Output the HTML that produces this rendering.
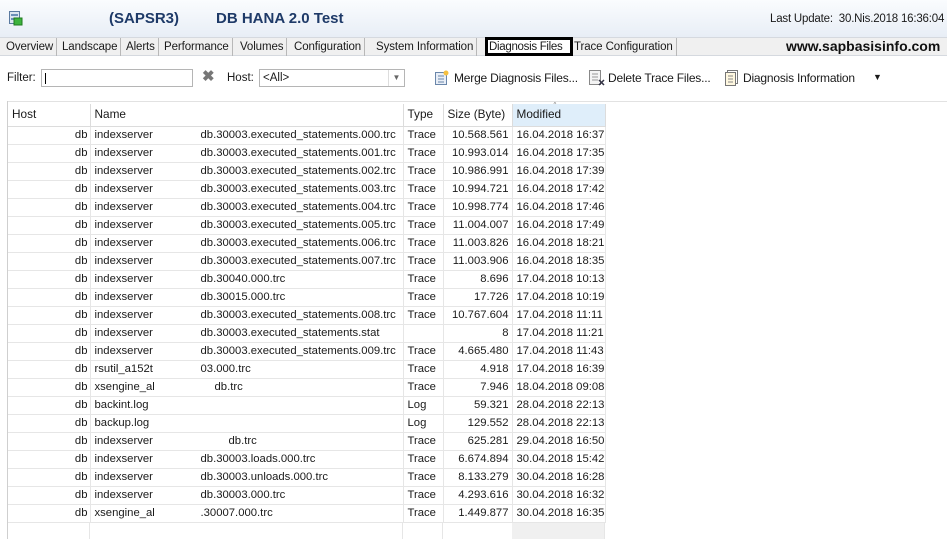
<!DOCTYPE html>
<html><head><meta charset="utf-8"><style>
*{margin:0;padding:0;box-sizing:border-box}
body{width:947px;height:539px;overflow:hidden;background:#fff;font-family:"Liberation Sans",sans-serif;font-size:11.5px;color:#1a1a1a;position:relative}
.ab{position:absolute;white-space:nowrap}
.hdr{position:absolute;left:0;top:0;width:947px;height:37px;background:linear-gradient(#fafcfe,#e8eef6)}
.t1{position:absolute;top:10px;font-weight:bold;font-size:15px;color:#1e3a68;white-space:nowrap}
.tabs{position:absolute;left:0;top:37px;width:947px;height:19px;background:#f0f0f0;border-top:1px solid #d5d9df;border-bottom:1px solid #d5d9df}
.tab{position:absolute;top:0;height:18px;line-height:18px;padding:0 3px;border-right:1px solid #b8b8b8;font-size:11.5px;letter-spacing:-0.1px;white-space:nowrap}
table{position:absolute;left:8px;top:104px;border-collapse:collapse;table-layout:fixed;width:597px;font-size:11.3px}
td,th{height:18px;line-height:17px;font-weight:normal;white-space:nowrap;overflow:hidden;border-right:1px solid #e6e6e6;border-bottom:1px solid #e6e6e6;padding:0 4px}
th{height:22px;line-height:21px;text-align:left;background:#fff;border-right:1px solid #dcdcdc;border-bottom:1px solid #dcdcdc;font-size:11.8px}
th.m{background:#dfeefa}
td.h{text-align:right;padding-right:2px}
td.r{text-align:right;padding-right:3px}
td i{font-style:normal;display:inline-block;width:106px}
</style></head><body>
<div class="hdr"></div>
<svg class="ab" style="left:9px;top:11px" width="14" height="15"><rect x="0.5" y="0.5" width="10" height="12" fill="#dce6f1" stroke="#5a7aa0"/><rect x="2" y="3" width="7" height="2" fill="#6b8fb8"/><rect x="2" y="7" width="7" height="2" fill="#6b8fb8"/><rect x="5" y="7" width="8" height="7" fill="#3db33d" stroke="#1e7a1e"/></svg>
<div class="t1" style="left:109px">(SAPSR3)</div>
<div class="t1" style="left:216px">DB HANA 2.0 Test</div>
<div class="ab" style="left:770px;top:13px;font-size:11.5px;letter-spacing:-0.2px">Last Update:&nbsp; 30.Nis.2018 16:36:04</div>
<div class="tabs">
<div class="tab" style="left:3px">Overview</div>
<div class="tab" style="left:59px">Landscape</div>
<div class="tab" style="left:123px">Alerts</div>
<div class="tab" style="left:161px">Performance</div>
<div class="tab" style="left:237px">Volumes</div>
<div class="tab" style="left:291px">Configuration</div>
<div class="tab" style="left:373px">System Information</div>
<div class="tab" style="left:571px">Trace Configuration</div>
<div class="ab" style="left:485px;top:-1px;width:88px;height:19px;border:3px solid #000;background:#fff;line-height:14px;padding-left:1px;font-size:11.5px;letter-spacing:-0.3px;overflow:hidden">Diagnosis Files</div>
<div class="ab" style="left:786px;top:0;font-weight:bold;font-size:14px;line-height:16px;color:#111">www.sapbasisinfo.com</div>
</div>
<div class="ab" style="left:7px;top:72px">Filter:</div>
<div class="ab" style="left:41px;top:69px;width:152px;height:18px;border:1px solid #b5b5b5"><div style="position:absolute;left:3px;top:3px;width:1px;height:11px;background:#000"></div></div>
<div class="ab" style="left:202px;top:67px;font-size:15px;color:#777;font-weight:bold">✖</div>
<div class="ab" style="left:227px;top:72px">Host:</div>
<div class="ab" style="left:259px;top:69px;width:146px;height:18px;border:1px solid #b5b5b5;padding:2px 3px">&lt;All&gt;<span style="position:absolute;right:0;top:0;width:16px;height:16px;border-left:1px solid #ddd;font-size:8px;color:#666;text-align:center;line-height:16px">▼</span></div>
<svg class="ab" style="left:435px;top:70px" width="14" height="15"><rect x="0.5" y="2.5" width="11" height="12" fill="#e8eef7" stroke="#6a86aa"/><path d="M3 6h6M3 9h6M3 12h6" stroke="#6a86aa"/><circle cx="11" cy="3" r="2.5" fill="#f5c040"/></svg>
<div class="ab" style="left:454px;top:71px;font-size:12px;letter-spacing:-0.2px">Merge Diagnosis Files...</div>
<svg class="ab" style="left:589px;top:70px" width="16" height="16"><rect x="0.5" y="0.5" width="11" height="14" fill="#f4f4f4" stroke="#888"/><path d="M3 4h6M3 7h6M3 10h6" stroke="#999"/><path d="M10 10l5 5M15 10l-5 5" stroke="#334" stroke-width="1.5"/></svg>
<div class="ab" style="left:608px;top:71px;font-size:12px;letter-spacing:-0.2px">Delete Trace Files...</div>
<svg class="ab" style="left:725px;top:70px" width="15" height="16"><rect x="2.5" y="0.5" width="10" height="13" fill="#fff" stroke="#777"/><rect x="0.5" y="2.5" width="10" height="13" fill="#fff8e0" stroke="#777"/><path d="M3 6h5M3 9h5M3 12h5" stroke="#888"/></svg>
<div class="ab" style="left:743px;top:71px;font-size:12px;letter-spacing:-0.2px">Diagnosis Information</div>
<div class="ab" style="left:873px;top:72px;font-size:9px">▼</div>
<div class="ab" style="left:8px;top:101px;width:939px;height:1px;background:#e2e2e2"></div>
<div class="ab" style="left:7px;top:101px;width:1px;height:438px;background:#cfcfcf"></div>
<div class="ab" style="left:512px;top:523px;width:93px;height:16px;background:#f0f0f0"></div>
<div class="ab" style="left:89px;top:523px;width:1px;height:16px;background:#e6e6e6"></div>
<div class="ab" style="left:402px;top:523px;width:1px;height:16px;background:#e6e6e6"></div>
<div class="ab" style="left:442px;top:523px;width:1px;height:16px;background:#e6e6e6"></div>
<div class="ab" style="left:604px;top:523px;width:1px;height:16px;background:#e6e6e6"></div>
<div class="ab" style="left:553px;top:101px;font-size:8px;color:#888">^</div>
<table>
<colgroup><col style="width:82px"><col style="width:313px"><col style="width:40px"><col style="width:69px"><col style="width:93px"></colgroup>
<tr><th>Host</th><th>Name</th><th>Type</th><th>Size (Byte)</th><th class="m">Modified</th></tr>
<tr><td class="h">db</td><td><i>indexserver</i>db.30003.executed_statements.000.trc</td><td>Trace</td><td class="r">10.568.561</td><td>16.04.2018 16:37</td></tr>
<tr><td class="h">db</td><td><i>indexserver</i>db.30003.executed_statements.001.trc</td><td>Trace</td><td class="r">10.993.014</td><td>16.04.2018 17:35</td></tr>
<tr><td class="h">db</td><td><i>indexserver</i>db.30003.executed_statements.002.trc</td><td>Trace</td><td class="r">10.986.991</td><td>16.04.2018 17:39</td></tr>
<tr><td class="h">db</td><td><i>indexserver</i>db.30003.executed_statements.003.trc</td><td>Trace</td><td class="r">10.994.721</td><td>16.04.2018 17:42</td></tr>
<tr><td class="h">db</td><td><i>indexserver</i>db.30003.executed_statements.004.trc</td><td>Trace</td><td class="r">10.998.774</td><td>16.04.2018 17:46</td></tr>
<tr><td class="h">db</td><td><i>indexserver</i>db.30003.executed_statements.005.trc</td><td>Trace</td><td class="r">11.004.007</td><td>16.04.2018 17:49</td></tr>
<tr><td class="h">db</td><td><i>indexserver</i>db.30003.executed_statements.006.trc</td><td>Trace</td><td class="r">11.003.826</td><td>16.04.2018 18:21</td></tr>
<tr><td class="h">db</td><td><i>indexserver</i>db.30003.executed_statements.007.trc</td><td>Trace</td><td class="r">11.003.906</td><td>16.04.2018 18:35</td></tr>
<tr><td class="h">db</td><td><i>indexserver</i>db.30040.000.trc</td><td>Trace</td><td class="r">8.696</td><td>17.04.2018 10:13</td></tr>
<tr><td class="h">db</td><td><i>indexserver</i>db.30015.000.trc</td><td>Trace</td><td class="r">17.726</td><td>17.04.2018 10:19</td></tr>
<tr><td class="h">db</td><td><i>indexserver</i>db.30003.executed_statements.008.trc</td><td>Trace</td><td class="r">10.767.604</td><td>17.04.2018 11:11</td></tr>
<tr><td class="h">db</td><td><i>indexserver</i>db.30003.executed_statements.stat</td><td></td><td class="r">8</td><td>17.04.2018 11:21</td></tr>
<tr><td class="h">db</td><td><i>indexserver</i>db.30003.executed_statements.009.trc</td><td>Trace</td><td class="r">4.665.480</td><td>17.04.2018 11:43</td></tr>
<tr><td class="h">db</td><td><i>rsutil_a152t</i>03.000.trc</td><td>Trace</td><td class="r">4.918</td><td>17.04.2018 16:39</td></tr>
<tr><td class="h">db</td><td><i style="width:120px">xsengine_al</i>db.trc</td><td>Trace</td><td class="r">7.946</td><td>18.04.2018 09:08</td></tr>
<tr><td class="h">db</td><td>backint.log</td><td>Log</td><td class="r">59.321</td><td>28.04.2018 22:13</td></tr>
<tr><td class="h">db</td><td>backup.log</td><td>Log</td><td class="r">129.552</td><td>28.04.2018 22:13</td></tr>
<tr><td class="h">db</td><td><i style="width:134px">indexserver</i>db.trc</td><td>Trace</td><td class="r">625.281</td><td>29.04.2018 16:50</td></tr>
<tr><td class="h">db</td><td><i>indexserver</i>db.30003.loads.000.trc</td><td>Trace</td><td class="r">6.674.894</td><td>30.04.2018 15:42</td></tr>
<tr><td class="h">db</td><td><i>indexserver</i>db.30003.unloads.000.trc</td><td>Trace</td><td class="r">8.133.279</td><td>30.04.2018 16:28</td></tr>
<tr><td class="h">db</td><td><i>indexserver</i>db.30003.000.trc</td><td>Trace</td><td class="r">4.293.616</td><td>30.04.2018 16:32</td></tr>
<tr><td class="h">db</td><td><i>xsengine_al</i>.30007.000.trc</td><td>Trace</td><td class="r">1.449.877</td><td>30.04.2018 16:35</td></tr>
</table>
</body></html>
